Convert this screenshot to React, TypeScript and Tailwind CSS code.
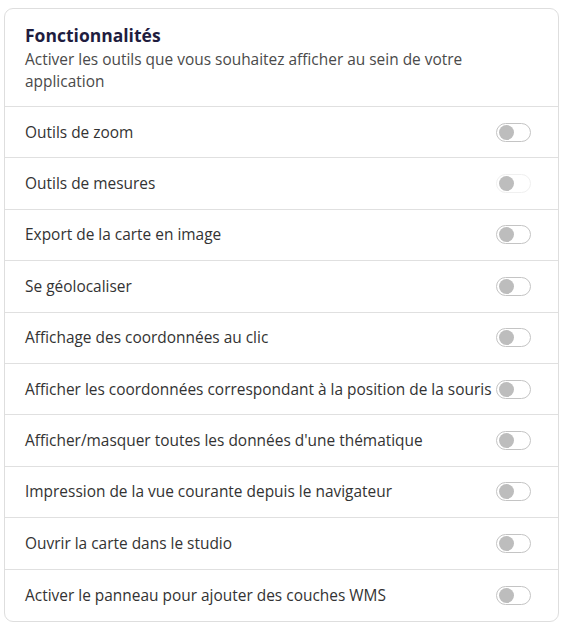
const features = [
  "Outils de zoom",
  "Outils de mesures",
  "Export de la carte en image",
  "Se géolocaliser",
  "Affichage des coordonnées au clic",
  "Afficher les coordonnées correspondant à la position de la souris",
  "Afficher/masquer toutes les données d'une thématique",
  "Impression de la vue courante depuis le navigateur",
  "Ouvrir la carte dans le studio",
  "Activer le panneau pour ajouter des couches WMS",
];

function Toggle({ faded }: { faded?: boolean }) {
  return (
    <span
      className={`flex h-[19px] w-[35px] shrink-0 items-center rounded-full border bg-white px-[2px] ${
        faded ? "border-[#f0f0f0]" : "border-[#c4c4c4]"
      }`}
    >
      <span className="h-[15px] w-[15px] rounded-full bg-[#bdbdbd]" />
    </span>
  );
}

export default function App() {
  return (
    <div className="min-h-[630px] bg-white pl-[4px] pt-[8px]" style={{ fontFamily: "'Open Sans', sans-serif" }}>
      <div className="w-[555px] rounded-[9px] border border-[#dedede] bg-white">
        <div className="border-b border-[#e0e0e0] px-[20px] pb-[14px] pt-[14px]">
          <h2 className="text-[17.5px] font-bold leading-[24px] text-[#1f1d3f]">Fonctionnalités</h2>
          <p className="mt-[1px] text-[15.45px] leading-[22px] text-[#4a4a4a]">
            Activer les outils que vous souhaitez afficher au sein de votre application
          </p>
        </div>
        {features.map((f, i) => (
          <div
            key={f}
            className={`flex h-[51.4px] items-center justify-between pl-[20px] pr-[27px] ${
              i < features.length - 1 ? "border-b border-[#e0e0e0]" : ""
            }`}
          >
            <span className="text-[15.45px] text-[#333333]">{f}</span>
            <Toggle faded={i === 1} />
          </div>
        ))}
      </div>
    </div>
  );
}
